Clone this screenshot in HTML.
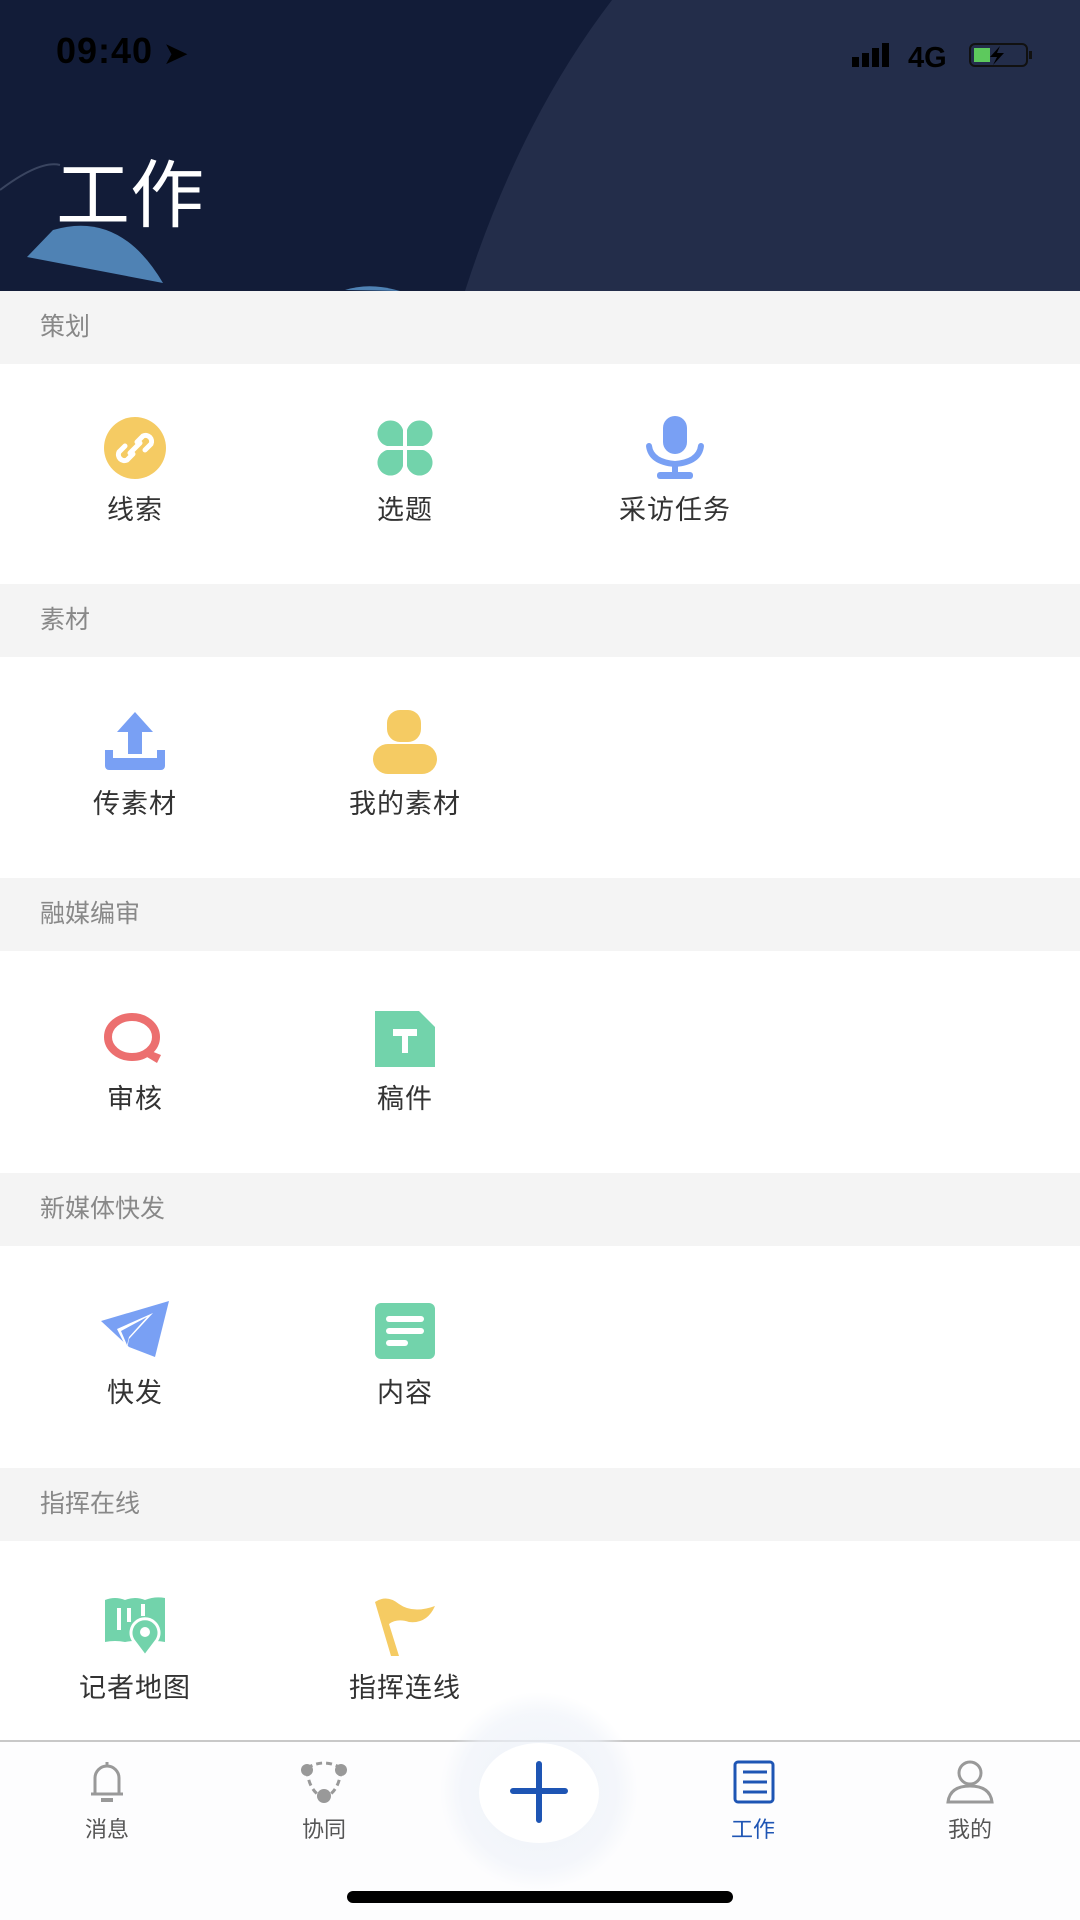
<!DOCTYPE html>
<html><head><meta charset="utf-8"><style>
*{margin:0;padding:0;box-sizing:border-box}
body{width:1080px;height:1920px;background:#fff;position:relative;overflow:hidden;font-family:"Liberation Sans","Noto Sans CJK SC",sans-serif}
.abs{position:absolute}
.band{position:absolute;left:0;width:1080px;height:73px;background:#f4f4f4;color:#888;font-size:25px;line-height:73px;padding-left:40px}
.it{position:absolute;width:240px;text-align:center;font-size:27px;color:#333;letter-spacing:1px}
.it svg{display:block;margin:0 auto 8px}
.tab{position:absolute;width:120px;text-align:center;font-size:22px;color:#555;top:1760px}
.tab svg{display:block;margin:0 auto 8px}
</style></head><body>
<svg class="abs" style="left:0;top:0" width="1080" height="291">
<rect width="1080" height="291" fill="#121c38"/>
<path d="M612 0 Q520 120 465 291 L1080 291 L1080 0Z" fill="#232d4a"/>
<path d="M53 230 L27 257 L163 283 Q120 210 53 230Z" fill="#4f82b4"/>
<path d="M345 290 Q370 282 400 291Z" fill="#4f82b4"/>
<path d="M0 190 Q40 160 60 165" stroke="#3a4560" fill="none" stroke-width="2"/>
</svg>
<div class="abs" style="left:56px;top:30px;font-size:36px;font-weight:bold;color:#000;letter-spacing:1px">09:40 <span style="font-size:28px">➤</span></div>
<svg class="abs" style="left:850px;top:40px" width="190" height="30">
<rect x="2" y="17" width="7" height="10" fill="#000"/><rect x="12" y="13" width="7" height="14" fill="#000"/><rect x="22" y="8" width="7" height="19" fill="#000"/><rect x="32" y="3" width="7" height="24" fill="#000"/>
<text x="58" y="27" font-size="29" font-weight="bold" font-family="Liberation Sans" fill="#000">4G</text>
<rect x="120" y="4" width="57" height="22" rx="5" fill="none" stroke="#111" stroke-width="2"/>
<rect x="124" y="8" width="16" height="14" fill="#5dc95d"/>
<path d="M150 6 L140 17 L147 17 L143 25 L154 13 L147 13Z" fill="#000"/>
<rect x="179" y="11" width="3" height="8" fill="#111"/>
</svg>
<div class="abs" style="left:56px;top:156px;font-size:74px;color:#fff;line-height:80px">工作</div>

<div class="band" style="top:291px">策划</div>
<div class="band" style="top:584px">素材</div>
<div class="band" style="top:878px">融媒编审</div>
<div class="band" style="top:1173px">新媒体快发</div>
<div class="band" style="top:1468px">指挥在线</div>

<div class="it" style="left:15px;top:416px"><svg width="64" height="64" viewBox="0 0 64 64"><circle cx="32" cy="32" r="31" fill="#f5cb63"/><g stroke="#fff" stroke-width="5" fill="none" stroke-linecap="round"><path d="M30 38 L24 44 a6 6 0 0 1 -8 -8 L22 30"/><path d="M34 26 L40 20 a6 6 0 0 1 8 8 L42 34"/><path d="M27 37 L37 27"/></g></svg>线索</div>
<div class="it" style="left:285px;top:416px"><svg width="64" height="64" viewBox="0 0 64 64" fill="#72d3ab"><path d="M30 30 H14 a13 13 0 1 1 16 -16Z"/><path d="M34 30 H50 a13 13 0 1 0 -16 -16Z"/><path d="M30 34 H14 a13 13 0 1 0 16 16Z"/><path d="M34 34 H50 a13 13 0 1 1 -16 16Z"/></svg>选题</div>
<div class="it" style="left:555px;top:416px"><svg width="64" height="64" viewBox="0 0 64 64"><rect x="20" y="0" width="24" height="38" rx="12" fill="#79a0f4"/><path d="M6 30 Q8 46 32 48 Q56 46 58 30" stroke="#79a0f4" stroke-width="6" fill="none" stroke-linecap="round"/><rect x="29" y="46" width="6" height="12" fill="#79a0f4"/><rect x="14" y="56" width="36" height="7" rx="3" fill="#79a0f4"/></svg>采访任务</div>

<div class="it" style="left:15px;top:710px"><svg width="64" height="64" viewBox="0 0 64 64" fill="#79a0f4"><path d="M32 2 L50 22 H39 V44 H25 V22 H14Z"/><path d="M2 40 H10 V48 H54 V40 H62 V56 a4 4 0 0 1 -4 4 H6 a4 4 0 0 1 -4 -4Z"/></svg>传素材</div>
<div class="it" style="left:285px;top:710px"><svg width="64" height="64" viewBox="0 0 64 64" fill="#f5cb63"><rect x="14" y="0" width="34" height="32" rx="13"/><rect x="0" y="34" width="64" height="30" rx="15"/></svg>我的素材</div>

<div class="it" style="left:15px;top:1005px"><svg width="64" height="64" viewBox="0 0 64 64"><ellipse cx="29" cy="32" rx="24" ry="20" stroke="#ec6f6f" stroke-width="8" fill="none"/><path d="M48 46 L58 50 L54 58 L44 52Z" fill="#ec6f6f"/></svg>审核</div>
<div class="it" style="left:285px;top:1005px"><svg width="64" height="64" viewBox="0 0 64 64"><path d="M2 6 H46 L62 22 V62 H2Z" fill="#72d3ab"/><path d="M20 24 H44 V31 H35 V48 H29 V31 H20Z" fill="#fff"/></svg>稿件</div>

<div class="it" style="left:15px;top:1299px"><svg width="72" height="64" viewBox="0 0 72 64"><path d="M2 22 L70 2 L56 58 L30 48 Z" fill="#79a0f4"/><path d="M18 30 L28 50 L30 40 L54 14Z" fill="#fff"/><path d="M22 32 L28 46 L30 38 L48 18Z" fill="#79a0f4"/></svg>快发</div>
<div class="it" style="left:285px;top:1299px"><svg width="64" height="64" viewBox="0 0 64 64"><rect x="2" y="4" width="60" height="56" rx="6" fill="#72d3ab"/><g stroke="#fff" stroke-width="6" stroke-linecap="round"><path d="M16 20 H48"/><path d="M16 32 H48"/><path d="M16 44 H32"/></g></svg>内容</div>

<div class="it" style="left:15px;top:1594px"><svg width="64" height="64" viewBox="0 0 64 64"><path d="M2 6 Q12 2 22 6 Q32 2 42 6 Q52 2 62 4 V48 Q52 46 42 48 Q32 46 22 48 Q12 46 2 48Z" fill="#72d3ab"/><g stroke="#fff" stroke-width="4"><path d="M16 14 V36"/><path d="M26 14 V28"/><path d="M40 10 V22"/></g><path d="M42 62 L30 46 a14 14 0 1 1 24 0Z" fill="#72d3ab" stroke="#fff" stroke-width="3"/><circle cx="42" cy="38" r="5" fill="#fff"/></svg>记者地图</div>
<div class="it" style="left:285px;top:1594px"><svg width="64" height="64" viewBox="0 0 64 64" fill="#f5cb63"><path d="M2 8 Q14 0 26 10 Q40 20 62 12 Q54 30 36 28 Q24 24 16 30 L26 62 H18 Z"/></svg>指挥连线</div>

<div class="abs" style="left:0;top:1740px;width:1080px;height:180px;background:#fdfdfe;border-top:2px solid #c8c8c8"></div>
<div class="abs" style="left:439px;top:1691px;width:200px;height:200px;border-radius:50%;background:radial-gradient(circle,#eef2f9 0%,rgba(238,242,249,0.6) 55%,rgba(255,255,255,0) 70%)"></div>
<div class="abs" style="left:479px;top:1743px;width:120px;height:100px;border-radius:50%;background:#fff"></div>
<svg class="abs" style="left:509px;top:1758px" width="60" height="66"><path d="M30 6 V62 M4 33 H56" stroke="#1e55b4" stroke-width="6" stroke-linecap="round"/></svg>
<div class="tab" style="left:47px"><svg width="44" height="44" viewBox="0 0 44 44" fill="none" stroke="#999" stroke-width="3"><path d="M22 2 V6 M10 34 V18 a12 12 0 0 1 24 0 V34 Z M6 34 H38"/><path d="M16 40 H28" stroke-width="4"/></svg>消息</div>
<div class="tab" style="left:264px"><svg width="50" height="44" viewBox="0 0 50 44"><path d="M8 8 Q25 -2 42 8 M8 10 Q10 32 25 38 M42 10 Q40 32 25 38" stroke="#999" stroke-width="3" fill="none" stroke-dasharray="6 4"/><circle cx="8" cy="10" r="6" fill="#999"/><circle cx="42" cy="10" r="6" fill="#999"/><circle cx="25" cy="36" r="7" fill="#999"/></svg>协同</div>
<div class="tab" style="left:693px;color:#1e55b4"><svg width="44" height="44" viewBox="0 0 44 44" fill="none" stroke="#1e55b4" stroke-width="3"><rect x="4" y="2" width="38" height="40" rx="3"/><path d="M12 12 H36 M12 22 H36 M12 32 H36" stroke-width="3"/></svg>工作</div>
<div class="tab" style="left:910px"><svg width="50" height="44" viewBox="0 0 50 44" fill="none" stroke="#999" stroke-width="3"><circle cx="25" cy="13" r="11"/><path d="M3 42 Q5 26 25 26 Q45 26 47 42Z"/></svg>我的</div>
<div class="abs" style="left:347px;top:1891px;width:386px;height:12px;border-radius:6px;background:#000"></div>
</body></html>
